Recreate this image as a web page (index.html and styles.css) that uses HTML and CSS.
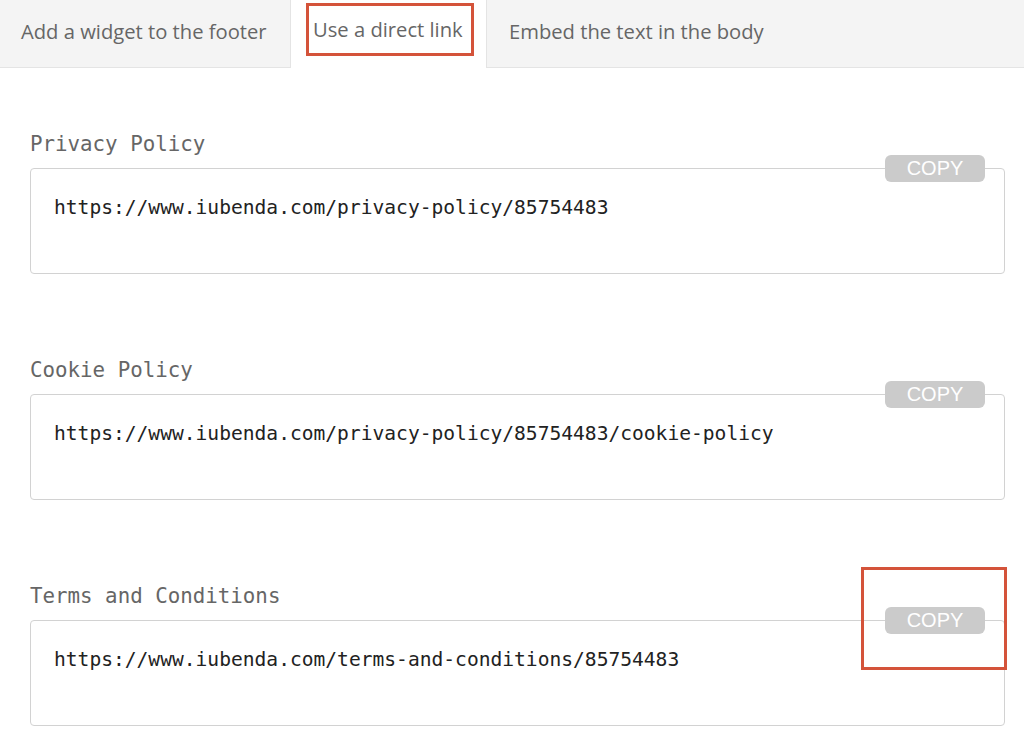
FILE: index.html
```html
<!DOCTYPE html>
<html>
<head>
<meta charset="utf-8">
<link rel="stylesheet" href="styles.css">
</head>
<body>
<div class="tabs">
  <div class="tab tab-first">Add a widget to the footer</div>
  <div class="tab tab-active"><span class="hl-tab">Use a direct link</span></div>
  <div class="tab tab-last">Embed the text in the body</div>
</div>
<div class="content">
  <div class="section">
    <div class="label">Privacy Policy</div>
    <div class="box">
      <div class="url">https://www.iubenda.com/privacy-policy/85754483</div>
      <button class="copy">COPY</button>
    </div>
  </div>
  <div class="section">
    <div class="label">Cookie Policy</div>
    <div class="box">
      <div class="url">https://www.iubenda.com/privacy-policy/85754483/cookie-policy</div>
      <button class="copy">COPY</button>
    </div>
  </div>
  <div class="section">
    <div class="label">Terms and Conditions</div>
    <div class="box">
      <div class="url">https://www.iubenda.com/terms-and-conditions/85754483</div>
      <button class="copy">COPY</button>
      <div class="hl-copy"></div>
    </div>
  </div>
</div>
</body>
</html>
```
FILE: styles.css
```css
html, body {
  margin: 0;
  padding: 0;
  background: #fff;
}
body {
  width: 1024px;
  height: 740px;
  overflow: hidden;
  font-family: "Open Sans", "Liberation Sans", sans-serif;
}
.tabs {
  display: flex;
  height: 68px;
}
.tab {
  box-sizing: border-box;
  height: 68px;
  font-size: 20.2px;
  color: #666;
  display: flex;
  align-items: center;
  white-space: nowrap;
}
.tab-first {
  width: 291px;
  padding-left: 21px;
  padding-bottom: 6px;
  background: #f4f4f4;
  border-right: 1px solid #e4e4e4;
  border-bottom: 1px solid #e4e4e4;
}
.tab-active {
  width: 195px;
  background: #fff;
  padding-left: 15px;
  align-items: flex-start;
  padding-top: 3px;
}
.hl-tab {
  box-sizing: border-box;
  width: 168px;
  height: 53px;
  border: 3px solid #d4533a;
  padding-left: 4px;
  display: flex;
  align-items: center;
  padding-bottom: 2px;
}
.tab-last {
  flex: 1;
  padding-left: 22px;
  padding-bottom: 6px;
  background: #f4f4f4;
  border-left: 1px solid #e4e4e4;
  border-bottom: 1px solid #e4e4e4;
}
.content {
  padding: 64px 19px 0 30px;
}
.section {
  margin-bottom: 84px;
}
.section:last-child {
  margin-bottom: 0;
}
.label {
  font-family: "DejaVu Sans Mono", "Liberation Mono", monospace;
  font-size: 20.8px;
  line-height: 24px;
  color: #666;
  margin-bottom: 12px;
}
.box {
  position: relative;
  box-sizing: border-box;
  height: 106px;
  border: 1px solid #d2d2d2;
  border-radius: 4px;
  padding: 27px 23px 0 23px;
}
.url {
  font-family: "DejaVu Sans Mono", "Liberation Mono", monospace;
  font-size: 19.6px;
  line-height: 24px;
  color: #222;
}
.copy {
  position: absolute;
  right: 19px;
  top: -14px;
  width: 100px;
  height: 27px;
  border: none;
  border-radius: 6px;
  background: #cbcbcb;
  color: #fff;
  font-family: "Liberation Sans", Arial, sans-serif;
  font-size: 20px;
  line-height: 27px;
  padding: 0;
}
.hl-copy {
  position: absolute;
  right: -3px;
  top: -54px;
  width: 146px;
  height: 103px;
  box-sizing: border-box;
  border: 3px solid #d4533a;
}
```
